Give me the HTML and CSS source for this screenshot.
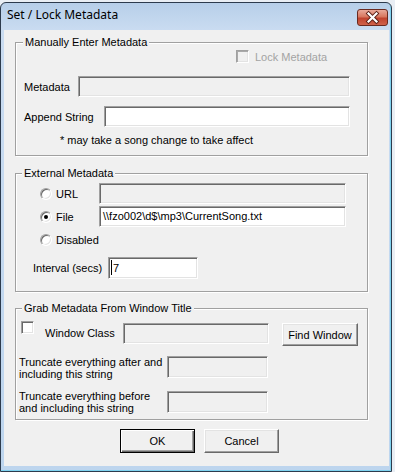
FILE: index.html
```html
<!DOCTYPE html>
<html lang="en">
<head>
    <meta charset="utf-8">
    <meta name="viewport" content="width=device-width, initial-scale=1.0">
    <title>Set / Lock Metadata</title>

    <link rel="stylesheet" href="styles.css">
</head>

<body>
    <div class="window">
        <div class="titlebar">
            <span class="title">Set / Lock Metadata</span>
            <span class="close">
                <svg width="29" height="15" viewBox="0 0 29 15">
                    <path d="M10.5 3.5 L18.5 11.5 M18.5 3.5 L10.5 11.5" stroke="#5a1f17" stroke-width="4" stroke-linecap="square"/>
                    <path d="M10.5 3.5 L18.5 11.5 M18.5 3.5 L10.5 11.5" stroke="#fff" stroke-width="2.2" stroke-linecap="square"/>
                </svg>
            </span>
        </div>

        <div class="client">

            <!-- manual -->
            <div class="group g1">
                <span class="group-title">Manually Enter Metadata</span>
                <div class="row lock-row">
                    <span class="check off"></span>
                    <span class="grey">Lock Metadata</span>
                </div>
                <div class="row meta-row">
                    <span class="lbl w54">Metadata</span>
                    <span class="field off w272"></span>
                </div>
                <div class="row append-row">
                    <span class="lbl w80">Append String</span>
                    <span class="field w246"></span>
                </div>
                <div class="note">* may take a song change to take affect</div>
            </div>

            <!-- external -->
            <div class="group g2">
                <span class="group-title">External Metadata</span>
                <div class="row radio-row first">
                    <span class="radio"></span>
                    <span class="lbl w43">URL</span>
                    <span class="field off w247"></span>
                </div>
                <div class="row radio-row">
                    <span class="radio on"></span>
                    <span class="lbl w43">File</span>
                    <span class="field w247">\\fzo002\d$\mp3\CurrentSong.txt</span>
                </div>
                <div class="row radio-row">
                    <span class="radio"></span>
                    <span class="lbl">Disabled</span>
                </div>
                <div class="row interval-row">
                    <span class="lbl w75">Interval (secs)</span>
                    <span class="field w90 tall"><span class="caret"></span>7</span>
                </div>
            </div>

            <!-- window title -->
            <div class="group g3">
                <span class="group-title">Grab Metadata From Window Title</span>
                <div class="row class-row">
                    <span class="check"></span>
                    <span class="lbl class-lbl">Window Class</span>
                    <span class="field off w146"></span>
                    <span class="btn find">Find Window</span>
                </div>
                <div class="row trunc-row">
                    <span class="trunc-lbl">Truncate everything after and<br>including this string</span>
                    <span class="field off w101 tall"></span>
                </div>
                <div class="row trunc-row">
                    <span class="trunc-lbl">Truncate everything before<br>and including this string</span>
                    <span class="field off w101 tall down"></span>
                </div>
            </div>

            <div class="buttons">
                <span class="btn default">OK</span>
                <span class="btn">Cancel</span>
            </div>
        </div>
    </div>
</body>
</html>
```

FILE: styles.css
```css
body{
    margin:0;
    background-color:#e9eef4;
    font-family:"Liberation Sans", Arial, sans-serif;
    font-size:11px;
    color:#000;
}

.window{
    margin-top:2px;
    width:392px;
    height:470px;
    box-sizing:border-box;
    border:1px solid #2d3b4d;
    border-radius:6px 6px 0 0;
    background:linear-gradient(#b7cfe9, #cadcf1 28px, #bdd5ee);
    box-shadow:inset -1px -1px #7ed2ef;
    padding:0 2px 5px 3px;
    display:flex;
    flex-direction:column;
}

.titlebar{
    height:27px;
    display:flex;
    justify-content:space-between;
    align-items:flex-start;
}
.title{
    font-family:"Noto Sans", sans-serif;
    font-size:12px;
    line-height:16px;
    margin:4px 0 0 3px;
}
.close{
    width:31px;
    height:17px;
    box-sizing:border-box;
    margin:6px 1px 0 0;
    border:1px solid #6a2a20;
    border-radius:3px;
    background:linear-gradient(#e9a99a, #d8775f 45%, #c0432f 55%, #d0624a);
    display:flex;
    align-items:center;
    justify-content:center;
}

.client{
    flex:1;
    background-color:#f0f0f0;
    padding-left:11px;
}

/* group boxes */
.group{
    position:relative;
    box-sizing:border-box;
    width:353px;
    border:1px solid #a0a0a0;
    box-shadow:1px 1px #fff, inset 1px 1px #fff;
}
.group-title{
    position:absolute;
    top:-7px;
    left:7px;
    padding:0 2px;
    line-height:13px;
    background-color:#f0f0f0;
}
.g1{ margin-top:12px; height:114px; }
.g2{ margin-top:17px; height:119px; }
.g3{ margin-top:16px; height:112px; }
.g2 .group-title, .g3 .group-title{ left:6px; }

.row{
    display:flex;
    align-items:center;
}
.lbl{ white-space:nowrap; }
.w43{ width:43px; }
.w54{ width:54px; }
.w75{ width:75px; }
.w80{ width:80px; }
.grey{ color:#a3a3a3; }

/* inputs */
.field{
    box-sizing:border-box;
    height:21px;
    line-height:19px;
    padding-left:3px;
    background-color:#fff;
    border:1px solid;
    border-color:#a0a0a0 #fff #fff #a0a0a0;
    box-shadow:inset 1px 1px #696969, inset -1px -1px #e3e3e3;
    white-space:nowrap;
}
.field.off{ background-color:#f0f0f0; }
.field.tall{ height:22px; line-height:20px; }
.w90{ width:90px; }
.w101{ width:101px; }
.w146{ width:146px; }
.w246{ width:246px; }
.w247{ width:247px; }
.w272{ width:272px; }

.caret{
    display:inline-block;
    width:1px;
    height:15px;
    background-color:#000;
    vertical-align:-3px;
    margin:0 1px 0 -1px;
}

.check{
    width:13px;
    height:13px;
    box-sizing:border-box;
    background-color:#fff;
    border:1px solid;
    border-color:#a0a0a0 #fff #fff #a0a0a0;
    box-shadow:inset 1px 1px #696969, inset -1px -1px #e3e3e3;
}
.check.off{
    background-color:#f0f0f0;
    box-shadow:inset 1px 1px #a9a9a9, inset -1px -1px #e3e3e3;
}

.radio{
    position:relative;
    width:12px;
    height:12px;
    box-sizing:border-box;
    border-radius:50%;
    background-color:#fff;
    border:1px solid;
    border-color:#a0a0a0 #fff #fff #a0a0a0;
    box-shadow:inset 1px 1px #696969, inset -1px -1px #e3e3e3;
    margin-right:4px;
}
.radio.on::after{
    content:"";
    position:absolute;
    left:3px;
    top:3px;
    width:4px;
    height:4px;
    border-radius:50%;
    background-color:#000;
}

.btn{
    box-sizing:border-box;
    height:24px;
    width:75px;
    display:flex;
    align-items:center;
    justify-content:center;
    background-color:#f0f0f0;
    border:1px solid;
    border-color:#fff #696969 #696969 #fff;
    box-shadow:inset -1px -1px #a0a0a0, inset 1px 1px #e3e3e3;
}
.btn.default{
    border:1px solid #000;
    box-shadow:inset 1px 1px #fff, inset -1px -1px #696969, inset -2px -2px #a0a0a0;
}

/* group 1 */
.lock-row{
    margin-top:7px;
    height:13px;
    padding-left:220px;
    gap:6px;
}
.meta-row{
    margin-top:13px;
    height:21px;
    padding-left:8px;
}
.append-row{
    margin-top:9px;
    height:21px;
    padding-left:8px;
}
.note{
    margin-top:7px;
    padding-left:44px;
    line-height:13px;
}

/* group 2 */
.radio-row{
    height:21px;
    margin-top:2px;
    padding-left:24px;
}
.radio-row.first{ margin-top:9px; }
.interval-row{
    margin-top:7px;
    height:22px;
    padding-left:17px;
}

/* group 3 */
.class-row{
    margin-top:12px;
    padding-left:5px;
    align-items:flex-start;
}
.class-lbl{
    width:78px;
    margin:2px 0 0 11px;
    line-height:21px;
}
.class-row .field{ margin-top:2px; }
.find{
    width:76px;
    height:23px;
    margin:2px 0 0 13px;
}
.trunc-row{
    margin-top:10px;
    padding-left:3px;
    align-items:flex-start;
}
.trunc-lbl{
    width:148px;
    line-height:12px;
    white-space:nowrap;
}
.field.down{ margin-top:1px; }

.buttons{
    margin-top:9px;
    padding-left:105px;
    display:flex;
    gap:9px;
}
```
